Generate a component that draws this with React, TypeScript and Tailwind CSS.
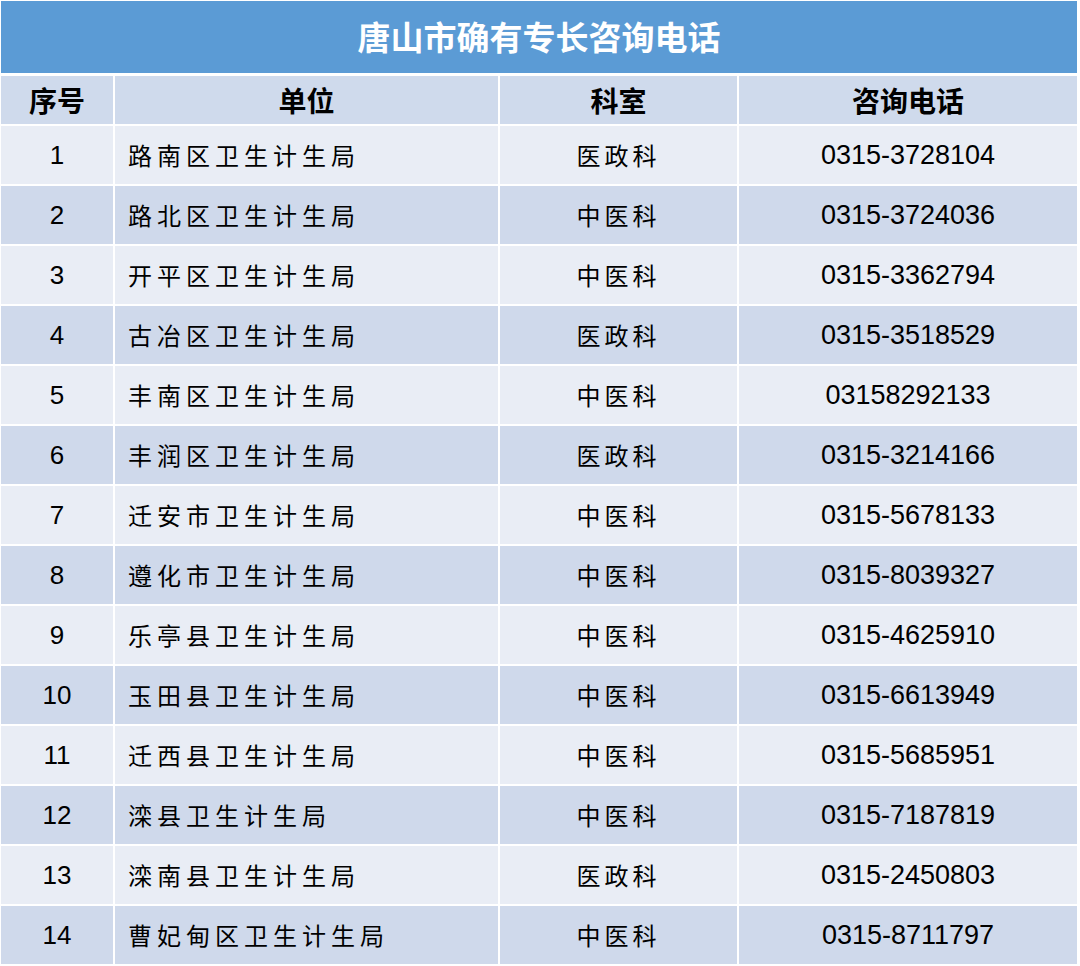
const rows = [
  ["1", "路南区卫生计生局", "医政科", "0315-3728104"],
  ["2", "路北区卫生计生局", "中医科", "0315-3724036"],
  ["3", "开平区卫生计生局", "中医科", "0315-3362794"],
  ["4", "古冶区卫生计生局", "医政科", "0315-3518529"],
  ["5", "丰南区卫生计生局", "中医科", "03158292133"],
  ["6", "丰润区卫生计生局", "医政科", "0315-3214166"],
  ["7", "迁安市卫生计生局", "中医科", "0315-5678133"],
  ["8", "遵化市卫生计生局", "中医科", "0315-8039327"],
  ["9", "乐亭县卫生计生局", "中医科", "0315-4625910"],
  ["10", "玉田县卫生计生局", "中医科", "0315-6613949"],
  ["11", "迁西县卫生计生局", "中医科", "0315-5685951"],
  ["12", "滦县卫生计生局", "中医科", "0315-7187819"],
  ["13", "滦南县卫生计生局", "医政科", "0315-2450803"],
  ["14", "曹妃甸区卫生计生局", "中医科", "0315-8711797"],
];

const cjk = "font-['Noto_Sans_CJK_SC',sans-serif]";
const num = "font-['Liberation_Sans','Noto_Sans_CJK_SC',sans-serif]";

export default function App() {
  return (
    <div className="w-[1080px] h-[966px] bg-white pl-[1px] pt-[1px] pr-[3px] text-black">
      <div
        className={`h-[72px] bg-[#5b9bd5] flex items-center justify-center text-white font-bold text-[33px] ${cjk}`}
      >
        唐山市确有专长咨询电话
      </div>
      <div className="mt-[3px] grid grid-cols-[112px_383px_237px_1fr] grid-rows-[48px_repeat(14,58px)] gap-[2px]">
        {["序号", "单位", "科室", "咨询电话"].map((h) => (
          <div
            key={h}
            className={`bg-[#cfdaec] flex items-center justify-center font-bold text-[28px] ${cjk}`}
          >
            {h}
          </div>
        ))}
        {rows.map((r, i) => {
          const bg = i % 2 === 0 ? "bg-[#e9edf5]" : "bg-[#cfd9eb]";
          return [
            <div key={r[0] + "a"} className={`${bg} flex items-center justify-center text-[26px] ${num}`}>
              {r[0]}
            </div>,
            <div key={r[0] + "b"} className={`${bg} flex items-center pl-[13px] text-[24px] tracking-[5px] ${cjk}`}>
              {r[1]}
            </div>,
            <div key={r[0] + "c"} className={`${bg} flex items-center justify-center text-[24px] tracking-[4px] ${cjk}`}>
              {r[2]}
            </div>,
            <div key={r[0] + "d"} className={`${bg} flex items-center justify-center text-[27px] ${num}`}>
              {r[3]}
            </div>,
          ];
        })}
      </div>
    </div>
  );
}
